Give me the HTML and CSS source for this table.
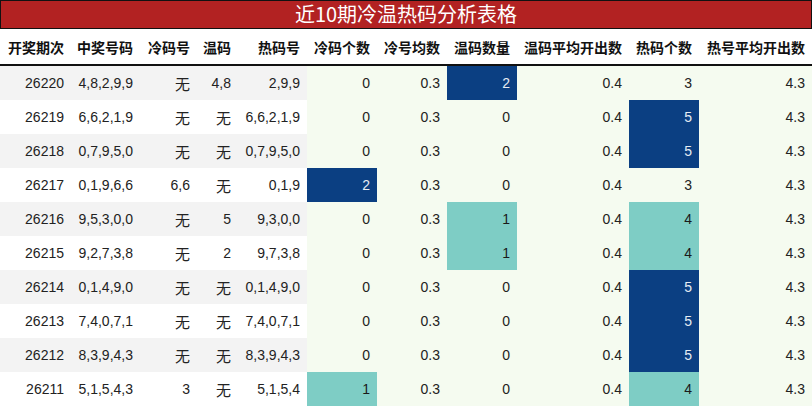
FILE: index.html
```html
<!DOCTYPE html>
<html lang="zh">
<head>
<meta charset="utf-8">
<title>近10期冷温热码分析表格</title>
<link rel="stylesheet" href="styles.css">
</head>
<body>
<div class="sheet">
  <div class="title">近10期冷温热码分析表格</div>
  <table class="grid">
    <colgroup>
      <col class="w71"><col class="w69"><col class="w57"><col class="w41"><col class="w69">
      <col class="w70"><col class="w70"><col class="w70"><col class="w112"><col class="w70"><col class="w113">
    </colgroup>
    <thead>
      <tr>
        <th>开奖期次</th><th>中奖号码</th><th>冷码号</th><th>温码</th><th>热码号</th>
        <th>冷码个数</th><th>冷号均数</th><th>温码数量</th><th>温码平均开出数</th><th>热码个数</th><th>热号平均开出数</th>
      </tr>
    </thead>
    <tbody>
      <tr class="odd"><td>26220</td><td>4,8,2,9,9</td><td class="cjk">无</td><td>4,8</td><td>2,9,9</td><td class="g">0</td><td class="g">0.3</td><td class="g dark">2</td><td class="g">0.4</td><td class="g">3</td><td class="g">4.3</td></tr>
      <tr><td>26219</td><td>6,6,2,1,9</td><td class="cjk">无</td><td class="cjk">无</td><td>6,6,2,1,9</td><td class="g">0</td><td class="g">0.3</td><td class="g">0</td><td class="g">0.4</td><td class="g dark">5</td><td class="g">4.3</td></tr>
      <tr class="odd"><td>26218</td><td>0,7,9,5,0</td><td class="cjk">无</td><td class="cjk">无</td><td>0,7,9,5,0</td><td class="g">0</td><td class="g">0.3</td><td class="g">0</td><td class="g">0.4</td><td class="g dark">5</td><td class="g">4.3</td></tr>
      <tr><td>26217</td><td>0,1,9,6,6</td><td>6,6</td><td class="cjk">无</td><td>0,1,9</td><td class="g dark">2</td><td class="g">0.3</td><td class="g">0</td><td class="g">0.4</td><td class="g">3</td><td class="g">4.3</td></tr>
      <tr class="odd"><td>26216</td><td>9,5,3,0,0</td><td class="cjk">无</td><td>5</td><td>9,3,0,0</td><td class="g">0</td><td class="g">0.3</td><td class="g teal">1</td><td class="g">0.4</td><td class="g teal">4</td><td class="g">4.3</td></tr>
      <tr><td>26215</td><td>9,2,7,3,8</td><td class="cjk">无</td><td>2</td><td>9,7,3,8</td><td class="g">0</td><td class="g">0.3</td><td class="g teal">1</td><td class="g">0.4</td><td class="g teal">4</td><td class="g">4.3</td></tr>
      <tr class="odd"><td>26214</td><td>0,1,4,9,0</td><td class="cjk">无</td><td class="cjk">无</td><td>0,1,4,9,0</td><td class="g">0</td><td class="g">0.3</td><td class="g">0</td><td class="g">0.4</td><td class="g dark">5</td><td class="g">4.3</td></tr>
      <tr><td>26213</td><td>7,4,0,7,1</td><td class="cjk">无</td><td class="cjk">无</td><td>7,4,0,7,1</td><td class="g">0</td><td class="g">0.3</td><td class="g">0</td><td class="g">0.4</td><td class="g dark">5</td><td class="g">4.3</td></tr>
      <tr class="odd"><td>26212</td><td>8,3,9,4,3</td><td class="cjk">无</td><td class="cjk">无</td><td>8,3,9,4,3</td><td class="g">0</td><td class="g">0.3</td><td class="g">0</td><td class="g">0.4</td><td class="g dark">5</td><td class="g">4.3</td></tr>
      <tr><td>26211</td><td>5,1,5,4,3</td><td>3</td><td class="cjk">无</td><td>5,1,5,4</td><td class="g teal">1</td><td class="g">0.3</td><td class="g">0</td><td class="g">0.4</td><td class="g teal">4</td><td class="g">4.3</td></tr>
    </tbody>
  </table>
</div>
</body>
</html>
```

FILE: styles.css
```css
html, body {
  margin: 0;
  padding: 0;
  background: #ffffff;
}
.sheet {
  width: 812px;
  font-family: "Liberation Sans", Arial, "Noto Sans CJK SC", sans-serif;
}
.title {
  box-sizing: border-box;
  height: 29px;
  border: 1px solid #111;
  background: #b22222;
  color: #ffffff;
  font-family: "Noto Sans CJK SC", sans-serif;
  font-size: 20px;
  line-height: 26px;
  text-align: center;
}
.grid {
  width: 812px;
  table-layout: fixed;
  border-collapse: collapse;
  border-spacing: 0;
}
.w71 { width: 71px; }
.w69 { width: 69px; }
.w57 { width: 57px; }
.w41 { width: 41px; }
.w70 { width: 70px; }
.w112 { width: 112px; }
.w113 { width: 113px; }
.grid th {
  height: 35px;
  padding: 0 7px 0 0;
  text-align: right;
  font-family: "Noto Sans CJK SC", sans-serif;
  font-weight: bold;
  font-size: 14px;
  color: #111;
  background: #ffffff;
  border-bottom: 2px solid #111;
  white-space: nowrap;
}
.grid td {
  height: 34px;
  padding: 0 7px 0 0;
  text-align: right;
  font-size: 14px;
  color: #222;
  background: #ffffff;
  white-space: nowrap;
}
.grid tr.odd td {
  background: #f3f3f3;
}
.grid td.cjk {
  font-family: "Noto Sans CJK SC", sans-serif;
  font-size: 15px;
}
.grid td.g,
.grid tr.odd td.g {
  background: #f5fbf0;
}
.grid td.dark,
.grid tr.odd td.dark {
  background: #0b3f82;
  color: #e6ecf4;
}
.grid td.teal,
.grid tr.odd td.teal {
  background: #7ecdc5;
  color: #1a1a1a;
}
```
